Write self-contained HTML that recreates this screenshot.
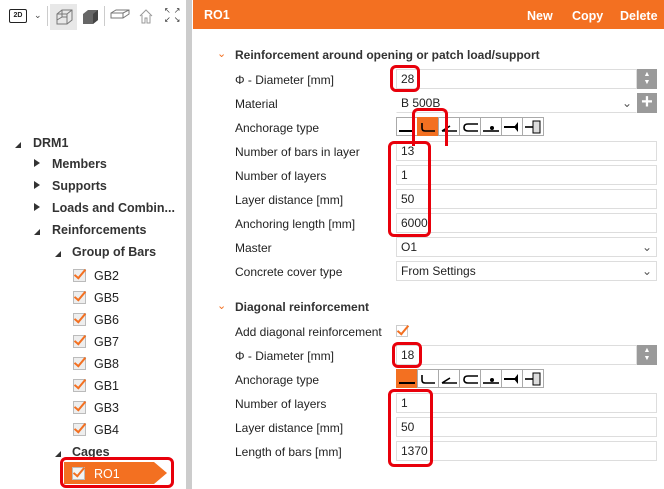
<!DOCTYPE html>
<html><head><meta charset="utf-8"><style>
*{margin:0;padding:0;box-sizing:border-box}
body{width:664px;height:489px;overflow:hidden;background:#fff;font-family:"Segoe UI","Liberation Sans",sans-serif;font-size:12px;color:#222;position:relative}
.a{position:absolute}
.tree{font-size:12.5px}
.tree .a{margin-top:2px}
.b{font-weight:bold;color:#333}
.tri{position:absolute;width:0;height:0}
.lbl{position:absolute;left:235px;font-size:12px;color:#222;margin-top:2px}
.inp{position:absolute;left:396px;width:261px;height:20px;border:1px solid #ddd;padding-left:4px;line-height:19px;font-size:12px;background:#fff}
.red{position:absolute;border:3px solid #e8000b;border-radius:6px}
.chk{position:absolute;width:13px;height:13px;border:1px solid #bbb;background:#eee}
.chk:after{content:"";position:absolute;left:3px;top:-3px;width:4px;height:10px;border:solid #f37021;border-width:0 2.5px 2.5px 0;transform:rotate(40deg)}
.spin{position:absolute;width:20px;height:20px;background:#9a9a9a;color:#fff;font-size:7px;text-align:center;line-height:8px;padding-top:2px}
.btnrow{position:absolute;left:396px;height:19px;display:flex}
.btnrow div{width:22px;height:19px;border:1px solid #aaa;margin-right:-1px;background:#fff}
.btnrow div.on{background:#f37021;border-color:#f37021}
.sec{margin-top:2px}
</style></head><body>
<div class="a" style="left:9px;top:9px;width:18px;height:14px;border:1.5px solid #222;border-radius:2px;font-size:7px;font-weight:bold;text-align:center;line-height:11px">2D</div>
<div class="a" style="left:34px;top:10px;font-size:9px;color:#444">&#8964;</div>
<div class="a" style="left:47px;top:6px;width:1px;height:20px;background:#ccc"></div>
<div class="a" style="left:50px;top:4px;width:27px;height:26px;background:#e8e8e8"></div>
<svg class="a" style="left:55px;top:8px" width="20" height="18"><path d="M2 6 L7 2 H17 V12 L12 16 H2 Z M2 6 H12 V16 M12 6 L17 2 M7 2 V9 L2 12 M7 9 H12" fill="none" stroke="#777" stroke-width="1"/></svg>
<svg class="a" style="left:81px;top:8px" width="20" height="18"><path d="M2 6 L7 2 H17 V12 L12 16 H2 Z" fill="#666"/><path d="M12 6 L17 2 V12 L12 16Z" fill="#444"/></svg>
<div class="a" style="left:104px;top:6px;width:1px;height:20px;background:#ccc"></div>
<svg class="a" style="left:110px;top:9px" width="20" height="14"><path d="M1 4 L6 1 H19 V5 L13 9 H1 Z M1 4 H13 V9 M13 4 L19 1" fill="none" stroke="#777"/></svg>
<svg class="a" style="left:138px;top:8px" width="16" height="16"><path d="M2 8 L8 2 L14 8 M4 7 V15 H7 V10 H9 V15 H12 V7" fill="none" stroke="#999"/></svg>
<div class="a" style="left:164px;top:6px;font-size:8px;color:#333;line-height:9px;letter-spacing:3px">&#8598;&#8599;<br>&#8601;&#8600;</div>
<div class="a" style="left:186px;top:0;width:6px;height:489px;background:#ccc"></div>
<div class="tree">
<div class="tri" style="left:15px;top:142px;border-left:6px solid transparent;border-bottom:6px solid #333"></div>
<div class="a b" style="left:33px;top:134px">DRM1</div>
<div class="tri" style="left:34px;top:159px;border-top:4px solid transparent;border-bottom:4px solid transparent;border-left:6px solid #333"></div>
<div class="a b" style="left:52px;top:155px">Members</div>
<div class="tri" style="left:34px;top:181px;border-top:4px solid transparent;border-bottom:4px solid transparent;border-left:6px solid #333"></div>
<div class="a b" style="left:52px;top:177px">Supports</div>
<div class="tri" style="left:34px;top:203px;border-top:4px solid transparent;border-bottom:4px solid transparent;border-left:6px solid #333"></div>
<div class="a b" style="left:52px;top:199px">Loads and Combin...</div>
<div class="tri" style="left:34px;top:229px;border-left:6px solid transparent;border-bottom:6px solid #333"></div>
<div class="a b" style="left:52px;top:221px">Reinforcements</div>
<div class="tri" style="left:55px;top:251px;border-left:6px solid transparent;border-bottom:6px solid #333"></div>
<div class="a b" style="left:72px;top:243px">Group of Bars</div>
<div class="chk" style="left:73px;top:269px"></div><div class="a" style="left:94px;top:267px">GB2</div>
<div class="chk" style="left:73px;top:291px"></div><div class="a" style="left:94px;top:289px">GB5</div>
<div class="chk" style="left:73px;top:313px"></div><div class="a" style="left:94px;top:311px">GB6</div>
<div class="chk" style="left:73px;top:335px"></div><div class="a" style="left:94px;top:333px">GB7</div>
<div class="chk" style="left:73px;top:357px"></div><div class="a" style="left:94px;top:355px">GB8</div>
<div class="chk" style="left:73px;top:379px"></div><div class="a" style="left:94px;top:377px">GB1</div>
<div class="chk" style="left:73px;top:401px"></div><div class="a" style="left:94px;top:399px">GB3</div>
<div class="chk" style="left:73px;top:423px"></div><div class="a" style="left:94px;top:421px">GB4</div>
<div class="tri" style="left:55px;top:451px;border-left:6px solid transparent;border-bottom:6px solid #333"></div>
<div class="a b" style="left:72px;top:443px">Cages</div>
<div class="a" style="left:64px;top:462px;width:90px;height:22px;background:#f37021;margin-top:0"></div>
<div class="tri" style="left:154px;top:462px;border-top:11px solid transparent;border-bottom:11px solid transparent;border-left:13px solid #f37021"></div>
<div class="chk" style="left:72px;top:467px;background:#f3f3f3"></div>
<div class="a" style="left:94px;top:465px;color:#fff">RO1</div>
</div>
<div class="red" style="left:60px;top:457px;width:114px;height:31px"></div>
<div class="a" style="left:193px;top:0;width:471px;height:29px;background:#f37021;color:#fff;font-weight:bold;font-size:12.5px">
<span class="a" style="left:11px;top:8px">RO1</span>
<span class="a" style="left:334px;top:9px">New</span>
<span class="a" style="left:379px;top:9px">Copy</span>
<span class="a" style="left:427px;top:9px">Delete</span>
</div>
<div class="a" style="left:217px;top:47px;color:#f37021;font-size:11px">&#8964;</div>
<div class="a b sec" style="left:235px;top:46px;color:#333">Reinforcement around opening or patch load/support</div>
<div class="lbl" style="top:71px">Φ - Diameter [mm]</div>
<div class="inp" style="top:69px;width:241px">28</div><div class="spin" style="left:637px;top:69px">▲<br>▼</div>
<div class="lbl" style="top:95px">Material</div>
<div class="inp" style="top:93px;width:241px;border-color:#fff;border-bottom-color:#ddd">B 500B<span style="position:absolute;right:4px;color:#555">&#8964;</span></div>
<div class="a" style="left:637px;top:93px;width:20px;height:20px;background:#9a9a9a;color:#fff;font-size:20px;font-weight:bold;text-align:center;line-height:19px">+</div>
<div class="lbl" style="top:119px">Anchorage type</div>
<div class="btnrow" style="top:117px">
<div><svg width="20" height="17"><path d="M2 13H18" stroke="#000" stroke-width="2"/></svg></div>
<div class="on"><svg width="20" height="17"><path d="M4 5V10Q4 13 7 13H17" stroke="#000" stroke-width="1.6" fill="none"/></svg></div>
<div><svg width="20" height="17"><path d="M3 13H18M3 13L11 8" stroke="#000" stroke-width="1.6" fill="none"/></svg></div>
<div><svg width="20" height="17"><path d="M18 6H8Q4 6 4 9.5Q4 13 8 13H18" stroke="#000" stroke-width="1.6" fill="none"/></svg></div>
<div><svg width="20" height="17"><path d="M2 13H18" stroke="#000" stroke-width="1.6"/><circle cx="11" cy="10" r="2"/></svg></div>
<div><svg width="20" height="17"><path d="M2 9H13" stroke="#000" stroke-width="2"/><path d="M12 9L16 4V14Z"/></svg></div>
<div><svg width="20" height="17"><path d="M2 9H10" stroke="#000" stroke-width="1.6"/><rect x="10" y="3" width="7" height="12" fill="#ddd" stroke="#000"/></svg></div>
</div>
<div class="lbl" style="top:143px">Number of bars in layer</div><div class="inp" style="top:141px">13</div>
<div class="lbl" style="top:167px">Number of layers</div><div class="inp" style="top:165px">1</div>
<div class="lbl" style="top:191px">Layer distance [mm]</div><div class="inp" style="top:189px">50</div>
<div class="lbl" style="top:215px">Anchoring length [mm]</div><div class="inp" style="top:213px">6000</div>
<div class="lbl" style="top:239px">Master</div><div class="inp" style="top:237px">O1<span style="position:absolute;right:4px;color:#555">&#8964;</span></div>
<div class="lbl" style="top:263px">Concrete cover type</div><div class="inp" style="top:261px">From Settings<span style="position:absolute;right:4px;color:#555">&#8964;</span></div>
<div class="a" style="left:217px;top:299px;color:#f37021;font-size:11px">&#8964;</div>
<div class="a b sec" style="left:235px;top:298px;color:#333">Diagonal reinforcement</div>
<div class="lbl" style="top:323px">Add diagonal reinforcement</div>
<div class="chk" style="left:396px;top:325px;width:12px;height:12px;background:#fff;border-color:#ccc"></div>
<div class="lbl" style="top:347px">Φ - Diameter [mm]</div>
<div class="inp" style="top:345px;width:241px">18</div><div class="spin" style="left:637px;top:345px">▲<br>▼</div>
<div class="lbl" style="top:371px">Anchorage type</div>
<div class="btnrow" style="top:369px">
<div class="on"><svg width="20" height="17"><path d="M2 13H18" stroke="#000" stroke-width="2"/></svg></div>
<div><svg width="20" height="17"><path d="M4 5V10Q4 13 7 13H17" stroke="#000" stroke-width="1.6" fill="none"/></svg></div>
<div><svg width="20" height="17"><path d="M3 13H18M3 13L11 8" stroke="#000" stroke-width="1.6" fill="none"/></svg></div>
<div><svg width="20" height="17"><path d="M18 6H8Q4 6 4 9.5Q4 13 8 13H18" stroke="#000" stroke-width="1.6" fill="none"/></svg></div>
<div><svg width="20" height="17"><path d="M2 13H18" stroke="#000" stroke-width="1.6"/><circle cx="11" cy="10" r="2"/></svg></div>
<div><svg width="20" height="17"><path d="M2 9H13" stroke="#000" stroke-width="2"/><path d="M12 9L16 4V14Z"/></svg></div>
<div><svg width="20" height="17"><path d="M2 9H10" stroke="#000" stroke-width="1.6"/><rect x="10" y="3" width="7" height="12" fill="#ddd" stroke="#000"/></svg></div>
</div>
<div class="lbl" style="top:395px">Number of layers</div><div class="inp" style="top:393px">1</div>
<div class="lbl" style="top:419px">Layer distance [mm]</div><div class="inp" style="top:417px">50</div>
<div class="lbl" style="top:443px">Length of bars [mm]</div><div class="inp" style="top:441px">1370</div>
<div class="red" style="left:390px;top:65px;width:30px;height:27px"></div>
<div class="red" style="left:412px;top:108px;width:36px;height:38px;border-bottom:none;border-radius:6px 6px 0 0"></div>
<div class="red" style="left:388px;top:141px;width:43px;height:96px"></div>
<div class="red" style="left:392px;top:342px;width:30px;height:26px"></div>
<div class="red" style="left:388px;top:389px;width:45px;height:78px"></div>
</body></html>
